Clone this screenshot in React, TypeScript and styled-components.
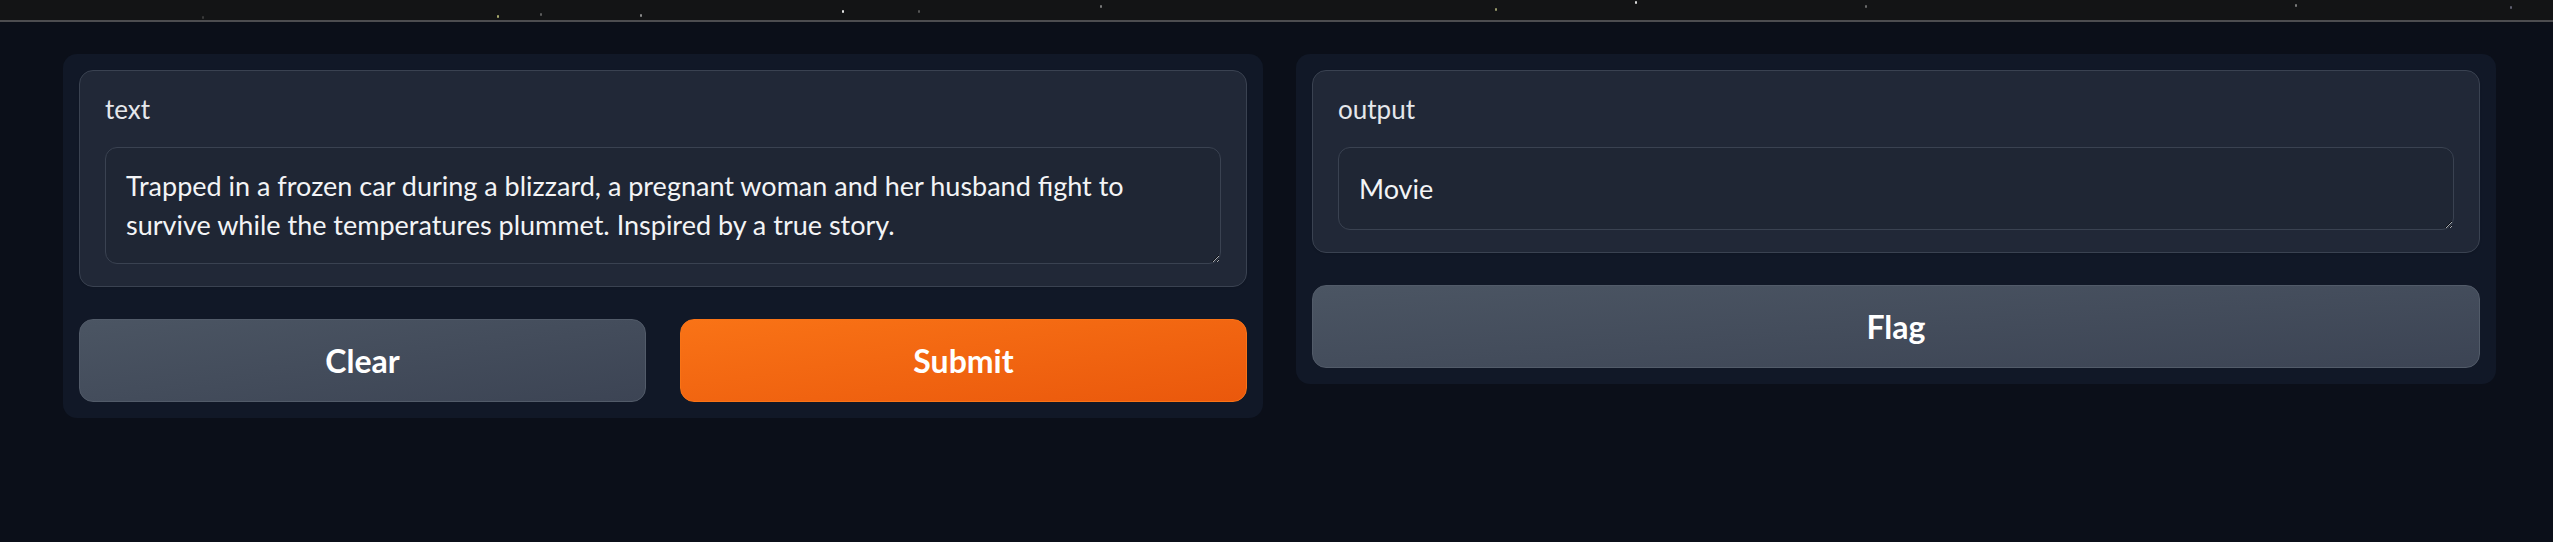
import React from "react";
import styled, { createGlobalStyle } from "styled-components";

const GlobalStyle = createGlobalStyle`
  html, body {
    margin: 0;
    background: #0b0f19;
  }
  body {
    font-family: "Source Sans Pro", Lato, "Noto Sans", sans-serif;
    color: #e5e7eb;
  }
  * {
    box-sizing: border-box;
  }
`;

const stars = [
  { x: 202, y: 16, c: "#3a3a3a", s: 2 },
  { x: 497, y: 15, c: "#a7a96c", s: 2 },
  { x: 540, y: 13, c: "#5d5d5d", s: 2 },
  { x: 640, y: 14, c: "#8a8a8a", s: 2 },
  { x: 842, y: 10, c: "#e2e2e2", s: 2 },
  { x: 918, y: 10, c: "#555555", s: 2 },
  { x: 1100, y: 5, c: "#7a7a7a", s: 2 },
  { x: 1495, y: 8, c: "#98996a", s: 2 },
  { x: 1635, y: 1, c: "#d8d8d8", s: 2 },
  { x: 1865, y: 5, c: "#6a6a6a", s: 2 },
  { x: 2295, y: 4, c: "#7a7a7a", s: 2 },
  { x: 2510, y: 6, c: "#5e5e6e", s: 2 },
];

export default function App() {
  return (
    <>
      <GlobalStyle />
      <StarBand>
        {stars.map((s, i) => (
          <Star key={i} $c={s.c} $s={s.s} style={{ left: s.x, top: s.y }} />
        ))}
      </StarBand>
      <Page>
        <Panel>
          <Block>
            <Label>text</Label>
            <TextArea
              $h={117}
              $py={18}
              readOnly
              value="Trapped in a frozen car during a blizzard, a pregnant woman and her husband fight to survive while the temperatures plummet. Inspired by a true story."
            />
          </Block>
          <ButtonRow>
            <Button $variant="secondary">Clear</Button>
            <Button $variant="primary">Submit</Button>
          </ButtonRow>
        </Panel>
        <Panel>
          <Block>
            <Label>output</Label>
            <TextArea $h={83} $py={21} readOnly value="Movie" />
          </Block>
          <Button $variant="secondary">Flag</Button>
        </Panel>
      </Page>
    </>
  );
}

const StarBand = styled.div`
  position: relative;
  height: 22px;
  background: #131415;
  border-bottom: 2px solid #4d4d50;
`;

const Star = styled.span<{ $c: string; $s: number }>`
  position: absolute;
  width: ${(p) => p.$s}px;
  height: ${(p) => p.$s + 1}px;
  background: ${(p) => p.$c};
  border-radius: 1px;
`;

const Page = styled.main`
  display: flex;
  align-items: flex-start;
  gap: 33px;
  padding: 32px 57px 0 63px;
`;

const Panel = styled.section`
  flex: 1;
  display: flex;
  flex-direction: column;
  gap: 32px;
  padding: 16px;
  background: #111827;
  border-radius: 14px;
`;

const Block = styled.div`
  display: flex;
  flex-direction: column;
  gap: 20px;
  padding: 21px 25px 22px;
  background: #212837;
  border: 1px solid #3a4251;
  border-radius: 14px;
  box-shadow: 0 1px 2px rgba(0, 0, 0, 0.1);
`;

const Label = styled.span`
  font-size: 26px;
  line-height: 35px;
  color: #e5e7eb;
`;

const TextArea = styled.textarea<{ $h: number; $py: number }>`
  display: block;
  width: 100%;
  height: ${(p) => p.$h}px;
  padding: ${(p) => p.$py}px 20px;
  font-family: inherit;
  font-size: 27px;
  line-height: 39px;
  color: #f3f4f6;
  background: #1f2634;
  border: 1px solid #3a4251;
  border-radius: 12px;
  resize: vertical;
  outline: none;
  color-scheme: dark;
  overflow: hidden;
`;

const ButtonRow = styled.div`
  display: grid;
  grid-template-columns: 1fr 1fr;
  gap: 34px;
`;

const Button = styled.button<{ $variant: "primary" | "secondary" }>`
  height: 83px;
  width: 100%;
  font-family: inherit;
  font-size: 32px;
  font-weight: 700;
  color: #ffffff;
  border-radius: 14px;
  cursor: pointer;
  border: 1px solid
    ${(p) => (p.$variant === "primary" ? "#f97316" : "#525b69")};
  background: ${(p) =>
    p.$variant === "primary"
      ? "linear-gradient(to bottom right, #f97316, #ea580c)"
      : "linear-gradient(to bottom right, #4b5563, #3c4454)"};
`;
